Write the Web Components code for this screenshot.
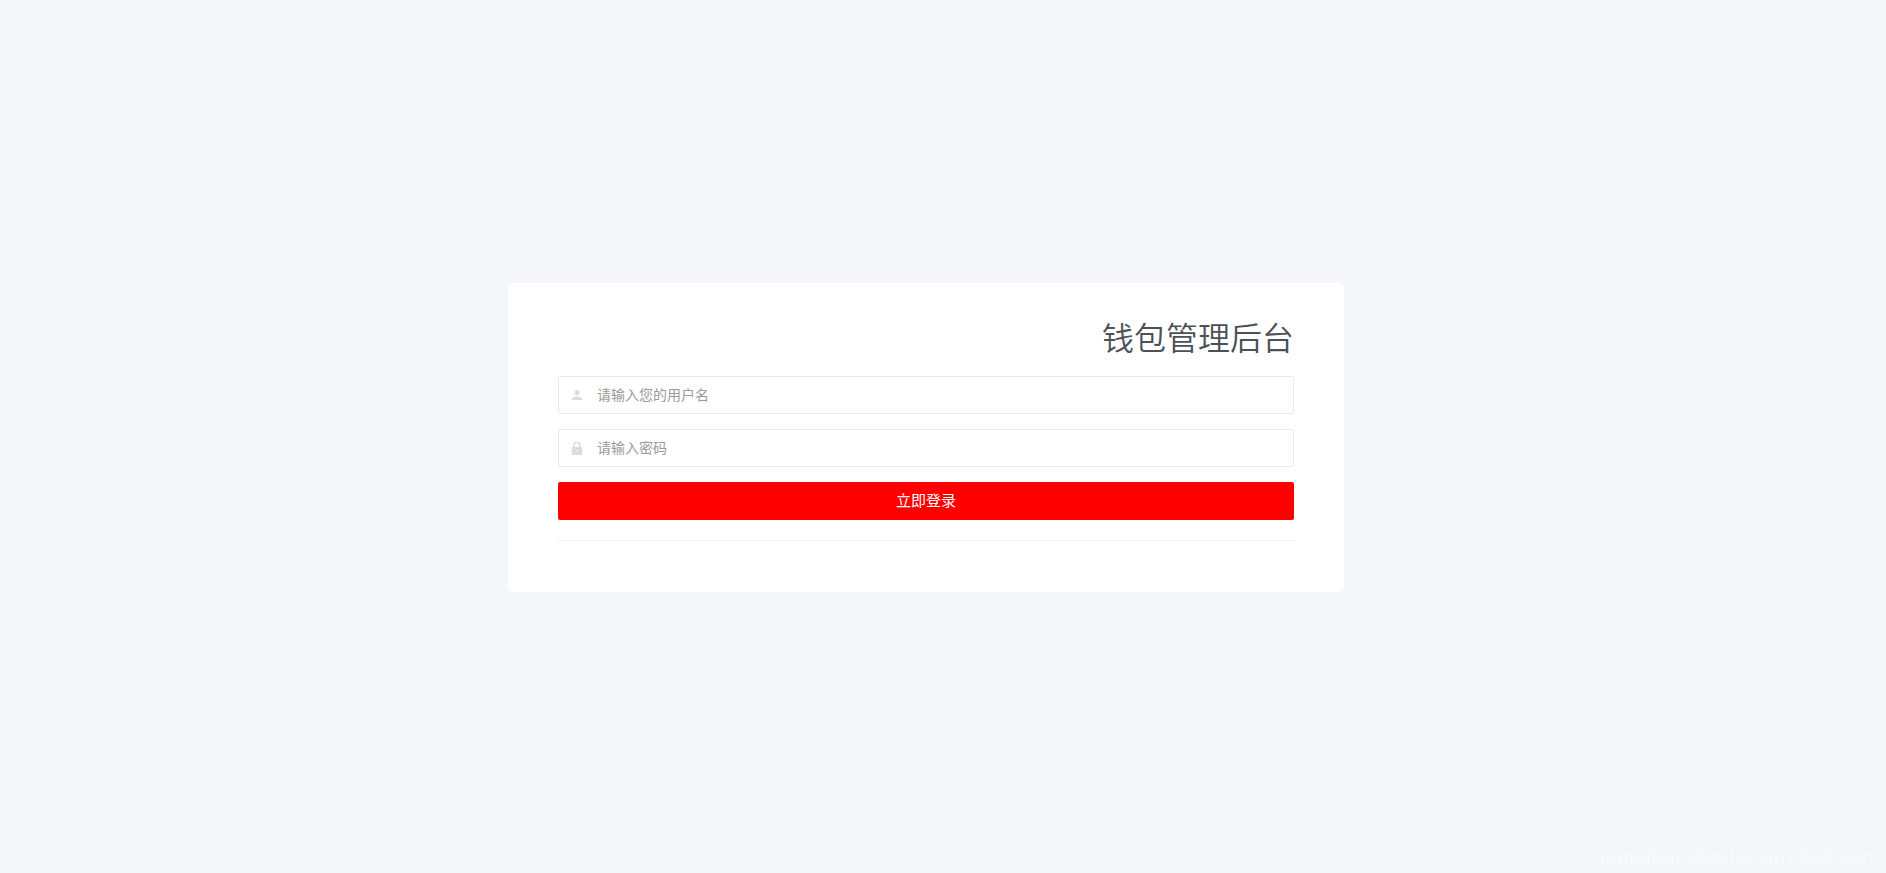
<!DOCTYPE html>
<html lang="zh">
<head>
<meta charset="utf-8">
<title>钱包管理后台</title>
<style>
    html, body { height: 100%; margin: 0; }
    body {
        background: #f5f6fa;
        font-family: "Liberation Sans", "Noto Sans CJK SC", sans-serif;
        overflow: hidden;
    }
</style>
</head>
<body>
<login-page>
    <login-card heading="钱包管理后台">
        <login-field icon="user" placeholder="请输入您的用户名"></login-field>
        <login-field icon="lock" placeholder="请输入密码"></login-field>
        <login-button>立即登录</login-button>
    </login-card>
</login-page>

<script>
const ICONS = {
    user: '<circle cx="7" cy="4.6" r="2.6"/><path d="M1.6 12c0-2.400 2.400-3.600 5.400-3.600s5.400 1.200 5.400 3.600z"/>',
    lock: '<path fill-rule="evenodd" d="M3.200 6V4.400a3.800 3.800 0 0 1 7.600 0V6h.4c.6 0 1 .4 1 1v6c0 .6-.4 1-1 1H2.800c-.6 0-1-.4-1-1V7c0-.6.4-1 1-1zm1.500 0h4.600V4.400a2.300 2.300 0 0 0-4.600 0z"/><circle cx="7" cy="10" r="1" fill="#eee"/>'
};

class LoginPage extends HTMLElement {
    constructor() {
        super();
        this.attachShadow({ mode: 'open' });
        this.shadowRoot.innerHTML = `
            <style>
                :host {
                    display: flex;
                    justify-content: center;
                    align-items: center;
                    box-sizing: border-box;
                    height: 100%;
                    padding: 1px 34px 0 0;
                    position: relative;
                }
                .mark {
                    position: absolute;
                    right: 6px;
                    bottom: 4px;
                    font: 20px/24px "Liberation Sans", sans-serif;
                    letter-spacing: 0.8px;
                    color: rgba(255, 255, 255, 0.45);
                }
            </style>
            <slot></slot>
            <div class="mark">jianzhan.charlesyin1204.com</div>
        `;
    }
}

class LoginCard extends HTMLElement {
    constructor() {
        super();
        this.attachShadow({ mode: 'open' });
    }

    connectedCallback() {
        this.shadowRoot.innerHTML = `
            <style>
                :host {
                    display: block;
                    box-sizing: border-box;
                    width: 836px;
                    height: 309px;
                    padding: 30px 50px 0;
                    background: #fff;
                    border-radius: 5px;
                }
                h1 {
                    margin: 0 0 17px;
                    height: 46px;
                    font: 350 32px/46px "Noto Sans CJK SC", sans-serif;
                    color: #4c5158;
                    text-align: right;
                }
                .form {
                    display: flex;
                    flex-direction: column;
                    gap: 15px;
                }
                hr {
                    height: 1px;
                    margin: 20px 0 0;
                    border: 0;
                    background: #f1f2f4;
                }
            </style>
            <h1>${this.getAttribute('heading')}</h1>
            <div class="form"><slot></slot></div>
            <hr>
        `;
    }
}

class LoginField extends HTMLElement {
    constructor() {
        super();
        this.attachShadow({ mode: 'open' });
    }

    connectedCallback() {
        const icon = ICONS[this.getAttribute('icon')];
        this.shadowRoot.innerHTML = `
            <style>
                :host {
                    display: flex;
                    align-items: center;
                    box-sizing: border-box;
                    height: 38px;
                    padding-left: 11px;
                    background: #fff;
                    border: 1px solid #e8e9eb;
                    border-radius: 2px;
                }
                svg {
                    width: 14px;
                    height: 14px;
                    margin-right: 13px;
                    fill: #dcdcde;
                    flex: none;
                }
                input {
                    flex: 1;
                    min-width: 0;
                    height: 100%;
                    padding: 0 0 2px;
                    box-sizing: border-box;
                    border: 0;
                    outline: 0;
                    background: transparent;
                    font: 14px "Noto Sans CJK SC", sans-serif;
                    color: #333;
                }
                input::placeholder {
                    color: #9a9a9a;
                    opacity: 1;
                }
            </style>
            <svg viewBox="0 0 14 14">${icon}</svg>
            <input type="text" placeholder="${this.getAttribute('placeholder')}">
        `;
    }
}

class LoginButton extends HTMLElement {
    constructor() {
        super();
        this.attachShadow({ mode: 'open' });
        this.shadowRoot.innerHTML = `
            <style>
                :host { display: block; }
                button {
                    display: block;
                    width: 100%;
                    height: 38px;
                    padding: 0 0 2px;
                    border: 0;
                    border-radius: 2px;
                    background: #f00;
                    color: #fff;
                    font: 15px "Noto Sans CJK SC", sans-serif;
                    cursor: pointer;
                }
            </style>
            <button type="button"><slot></slot></button>
        `;
    }
}

customElements.define('login-page', LoginPage);
customElements.define('login-card', LoginCard);
customElements.define('login-field', LoginField);
customElements.define('login-button', LoginButton);
</script>
</body>
</html>
